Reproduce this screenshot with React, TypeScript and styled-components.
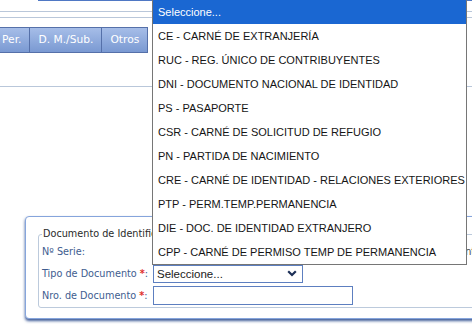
import React from "react";
import styled, { createGlobalStyle } from "styled-components";

const Global = createGlobalStyle`
  html, body { margin: 0; padding: 0; background: #ffffff; }
  body { overflow: hidden; }
`;

const Page = styled.div`
  position: relative;
  width: 472px;
  height: 325px;
  overflow: hidden;
  background: #ffffff;
  display: flex;
  flex-direction: column;
  font-family: "DejaVu Sans", Verdana, sans-serif;
`;

const HeaderEdge = styled.div`
  margin-left: 38px;
  height: 1px;
  background: #4f78c4;
  flex: none;
`;

const Rule = styled.div<{ $top: number }>`
  margin-top: ${(p) => p.$top}px;
  height: 1px;
  background: #b9c7da;
  flex: none;
`;

const TabBar = styled.div`
  display: flex;
  margin-top: 9px;
  margin-left: -7px;
  height: 26px;
  flex: none;
`;

const Tab = styled.div`
  display: flex;
  align-items: center;
  padding: 0 8px 1px 8px;
  background: linear-gradient(#a6bde8, #7a99d2);
  border: 1px solid #5570a9;
  border-left: none;
  color: #ffffff;
  font-size: 10.7px;
  &:first-child { border-left: 1px solid #5570a9; }
`;

const Panel = styled.div`
  margin-top: 129px;
  margin-left: 25px;
  width: 480px;
  border: 1px solid #86a5dc;
  border-radius: 4px;
  box-shadow: 0 2px 3px rgba(40, 72, 140, 0.9);
  padding: 11px 0 10px 12px;
  background: #ffffff;
  flex: none;
`;

const Fieldset = styled.fieldset`
  margin: 0;
  padding: 2px 0 2px 3px;
  border: 1px solid #bccadc;
  border-radius: 3px;
  display: flex;
  flex-direction: column;
  gap: 3px;
`;

const Legend = styled.legend`
  padding: 0 1px;
  margin-left: 0;
  font-size: 9.7px;
  color: #2a2a2a;
  line-height: 12px;
`;

const Row = styled.div`
  display: grid;
  grid-template-columns: 111px 315px auto;
  align-items: center;
  height: 19px;
`;

const Label = styled.span`
  font-size: 9.7px;
  color: #3e5d8f;
  white-space: nowrap;
`;

const SideText = styled.span`
  grid-column: 3;
  font-size: 9.7px;
  color: #444444;
  white-space: nowrap;
  margin-left: -24px;
`;

const Req = styled.span`
  color: #e0302c;
  font-weight: bold;
  margin-left: 3px;
`;

const SelectBox = styled.div`
  height: 16px;
  border: 1px solid #5d7fc0;
  display: flex;
  align-items: center;
  justify-content: space-between;
  padding: 0 5px 0 3px;
  box-sizing: content-box;
  font-family: "Liberation Sans", Arial, sans-serif;
  font-size: 11.5px;
  color: #1a1a1a;
  width: 140px;
`;

const TextBox = styled.div`
  width: 198px;
  height: 17px;
  border: 1px solid #5d7fc0;
`;

const Dropdown = styled.ul`
  position: absolute;
  left: 152px;
  top: 0;
  width: 313px;
  margin: 0;
  padding: 0;
  list-style: none;
  background: #ffffff;
  border: 1px solid #767676;
  border-top: none;
  font-family: "Liberation Sans", Arial, sans-serif;
  font-size: 11px;
  color: #151515;
`;

const Option = styled.li<{ $active?: boolean }>`
  height: 24px;
  line-height: 24px;
  padding-left: 5px;
  white-space: nowrap;
  background: ${(p) => (p.$active ? "#1a67d2" : "transparent")};
  color: ${(p) => (p.$active ? "#ffffff" : "#151515")};
`;

const options = [
  "Seleccione...",
  "CE - CARNÉ DE EXTRANJERÍA",
  "RUC - REG. ÚNICO DE CONTRIBUYENTES",
  "DNI - DOCUMENTO NACIONAL DE IDENTIDAD",
  "PS - PASAPORTE",
  "CSR - CARNÉ DE SOLICITUD DE REFUGIO",
  "PN - PARTIDA DE NACIMIENTO",
  "CRE - CARNÉ DE IDENTIDAD - RELACIONES EXTERIORES",
  "PTP - PERM.TEMP.PERMANENCIA",
  "DIE - DOC. DE IDENTIDAD EXTRANJERO",
  "CPP - CARNÉ DE PERMISO TEMP DE PERMANENCIA",
];

const Chevron = () => (
  <svg width="10" height="7" viewBox="0 0 10 7">
    <path d="M1.2 1.2 L5 5 L8.8 1.2" fill="none" stroke="#1c2f57" strokeWidth="2.2" />
  </svg>
);

export default function App() {
  return (
    <>
      <Global />
      <Page>
        <HeaderEdge />
        <Rule $top={10} />
        <Rule $top={5} />
        <TabBar>
          <Tab>Per.</Tab>
          <Tab>D. M./Sub.</Tab>
          <Tab>Otros</Tab>
        </TabBar>
        <Rule $top={33} />
        <Panel>
          <Fieldset>
            <Legend>Documento de Identificación</Legend>
            <Row>
              <Label>Nº Serie:</Label>
              <span />
              <SideText>Vigente</SideText>
            </Row>
            <Row>
              <Label>
                Tipo de Documento<Req>*</Req>:
              </Label>
              <SelectBox>
                <span>Seleccione...</span>
                <Chevron />
              </SelectBox>
            </Row>
            <Row>
              <Label>
                Nro. de Documento<Req>*</Req>:
              </Label>
              <TextBox />
            </Row>
          </Fieldset>
        </Panel>
        <Dropdown>
          {options.map((o, i) => (
            <Option key={o} $active={i === 0}>
              {o}
            </Option>
          ))}
        </Dropdown>
      </Page>
    </>
  );
}
